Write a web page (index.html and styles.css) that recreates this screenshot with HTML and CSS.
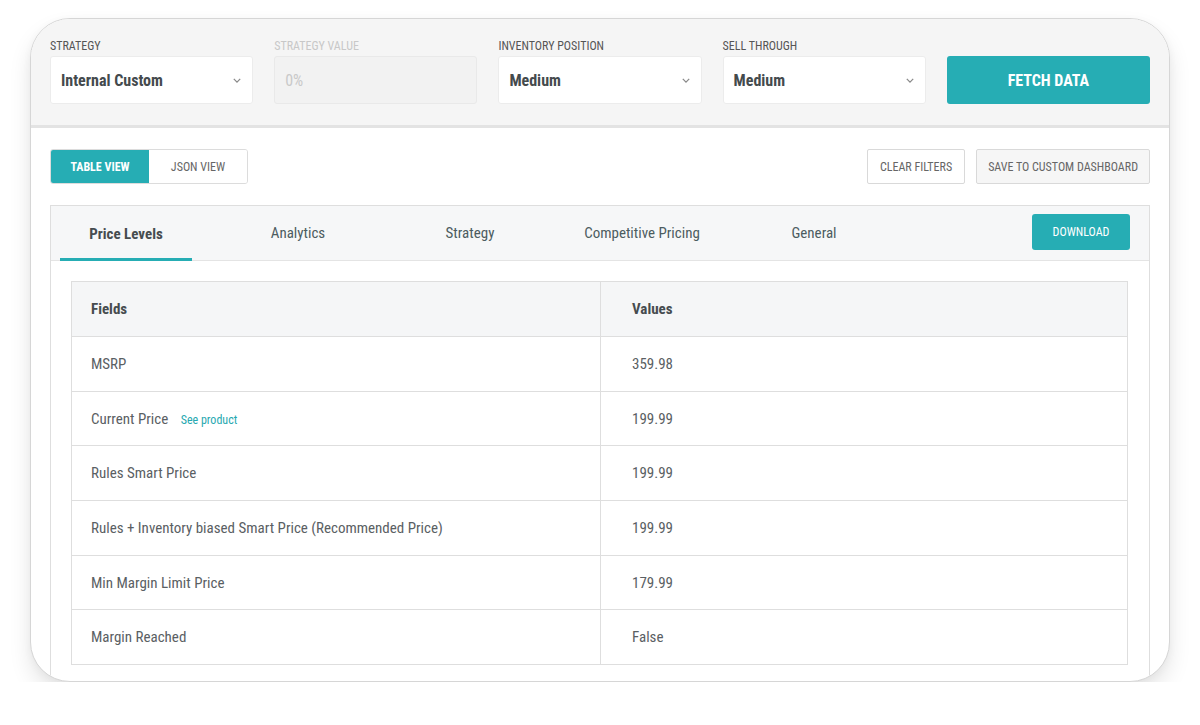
FILE: index.html
```html
<!DOCTYPE html>
<html>
<head>
<meta charset="utf-8">
<link rel="stylesheet" href="styles.css">
</head>
<body>
<div class="card">
  <div class="filters">
    <div class="field">
      <div class="label">Strategy</div>
      <div class="select"><span>Internal Custom</span><svg class="chev" viewBox="0 0 10 6" width="8" height="5"><path d="M1 1l4 4 4-4" fill="none" stroke="#8a8a8a" stroke-width="1.6"/></svg></div>
    </div>
    <div class="field disabled">
      <div class="label">Strategy Value</div>
      <div class="select"><span>0%</span></div>
    </div>
    <div class="field">
      <div class="label">Inventory Position</div>
      <div class="select"><span>Medium</span><svg class="chev" viewBox="0 0 10 6" width="8" height="5"><path d="M1 1l4 4 4-4" fill="none" stroke="#8a8a8a" stroke-width="1.6"/></svg></div>
    </div>
    <div class="field">
      <div class="label">Sell Through</div>
      <div class="select"><span>Medium</span><svg class="chev" viewBox="0 0 10 6" width="8" height="5"><path d="M1 1l4 4 4-4" fill="none" stroke="#8a8a8a" stroke-width="1.6"/></svg></div>
    </div>
    <div class="field action">
      <button class="fetch">FETCH DATA</button>
    </div>
  </div>
  <div class="content">
    <div class="toolbar">
      <div class="toggle">
        <button class="tog active">TABLE VIEW</button>
        <button class="tog">JSON VIEW</button>
      </div>
      <div class="right-btns">
        <button class="outline">CLEAR FILTERS</button>
        <button class="outline grey">SAVE TO CUSTOM DASHBOARD</button>
      </div>
    </div>
    <div class="panel">
      <div class="tabs">
        <div class="tab active">Price Levels</div>
        <div class="tab">Analytics</div>
        <div class="tab">Strategy</div>
        <div class="tab">Competitive Pricing</div>
        <div class="tab">General</div>
        <button class="download">DOWNLOAD</button>
      </div>
      <table class="data">
        <thead>
          <tr><th class="c1">Fields</th><th class="c2">Values</th></tr>
        </thead>
        <tbody>
          <tr><td class="c1">MSRP</td><td class="c2">359.98</td></tr>
          <tr><td class="c1">Current Price <a class="link">See product</a></td><td class="c2">199.99</td></tr>
          <tr><td class="c1">Rules Smart Price</td><td class="c2">199.99</td></tr>
          <tr><td class="c1">Rules + Inventory biased Smart Price (Recommended Price)</td><td class="c2">199.99</td></tr>
          <tr><td class="c1">Min Margin Limit Price</td><td class="c2">179.99</td></tr>
          <tr><td class="c1">Margin Reached</td><td class="c2">False</td></tr>
        </tbody>
      </table>
    </div>
  </div>
</div>
</body>
</html>
```
FILE: styles.css
```css
* { box-sizing: border-box; }
html, body { margin: 0; padding: 0; background: #ffffff; }
body {
  font-family: "Roboto Condensed", "Liberation Sans Narrow", "DejaVu Sans Condensed", Roboto, sans-serif;
  color: #4f5558;
}
button { font-family: inherit; cursor: pointer; }

.card {
  margin: 18px 30px 0;
  width: 1140px;
  height: 664px;
  border: 1px solid #d6d6d6;
  border-radius: 40px;
  overflow: hidden;
  background: #fff;
  box-shadow: 0 12px 22px rgba(0, 0, 0, 0.10), 0 2px 8px rgba(0, 0, 0, 0.04);
  display: flex;
  flex-direction: column;
}

.filters {
  background: #f5f5f5;
  padding: 20px 19px 21px 19px;
  border-bottom: 3px solid #e3e3e3;
  display: grid;
  grid-template-columns: repeat(5, 1fr);
  column-gap: 21px;
}
.field { display: flex; flex-direction: column; }
.label {
  font-size: 12px;
  line-height: 14px;
  height: 14px;
  margin-bottom: 3px;
  text-transform: uppercase;
  color: #555;
}
.select {
  height: 48px;
  background: #fff;
  border: 1px solid #ececec;
  border-radius: 3px;
  display: flex;
  align-items: center;
  justify-content: space-between;
  padding: 0 11px 0 10px;
  font-size: 16px;
  font-weight: 700;
  color: #444a4d;
}
.disabled .label { color: #c8c8c8; }
.disabled .select { background: #f2f2f2; color: #c9c9c9; font-weight: 400; border-color: #e9e9e9; }
.action { justify-content: flex-end; }
.fetch {
  height: 48px;
  border: none;
  border-radius: 3px;
  background: #26adb4;
  color: #fff;
  font-size: 16px;
  font-weight: 700;
}

.content {
  flex: 1;
  padding: 21px 19px 0 19px;
  display: flex;
  flex-direction: column;
  gap: 21px;
}
.toolbar { display: flex; justify-content: space-between; height: 35px; }
.toggle { display: flex; border: 1px solid #dcdcdc; border-radius: 3px; overflow: hidden; }
.tog {
  border: none;
  background: #fff;
  font-size: 12px;
  color: #666;
  padding: 0;
  width: 98px;
}
.tog.active { background: #26adb4; color: #fff; font-weight: 700; width: 98px; }
.right-btns { display: flex; gap: 11px; }
.outline {
  border: 1px solid #d9d9d9;
  border-radius: 2px;
  background: #fff;
  font-size: 12px;
  color: #666;
  padding: 0 12px;
}
.outline.grey { background: #f6f6f6; padding: 0 11px; }

.panel {
  flex: 1;
  border: 1px solid #dedede;
  border-bottom: none;
  display: flex;
  flex-direction: column;
}
.tabs {
  height: 55px;
  background: #f6f7f8;
  border-bottom: 1px solid #e4e4e4;
  display: flex;
  align-items: stretch;
  padding-left: 9px;
  gap: 40px;
}
.tab {
  width: 132px;
  display: flex;
  align-items: center;
  justify-content: center;
  font-size: 15px;
  color: #4c5c60;
  border-bottom: 3px solid transparent;
  margin-bottom: -1px;
  padding-top: 1px;
}
.tab.active { border-bottom-color: #26adb4; font-weight: 700; color: #464c4f; padding-top: 4px; }
.download {
  margin: 8px 19px 0 auto;
  align-self: flex-start;
  height: 36px;
  width: 98px;
  border: none;
  border-radius: 3px;
  background: #26adb4;
  color: #fff;
  font-size: 12px;
}

.data {
  margin: 20px 20px 0 20px;
  border-collapse: collapse;
  border: 1px solid #dcdcdc;
  font-size: 15px;
  width: 1057px;
}
.data th, .data td {
  text-align: left;
  border: 1px solid #dedede;
  height: 54.7px;
  padding: 0;
}
.data th { background: #f5f6f7; font-weight: 700; color: #464c4f; height: 55px; }
.data .c1 { width: 529px; padding-left: 19px; }
.data .c2 { padding-left: 31px; }
.data td { color: #5a6063; font-weight: 400; }
.link { color: #26a8b0; font-size: 12px; margin-left: 9px; font-weight: 400; }
```
